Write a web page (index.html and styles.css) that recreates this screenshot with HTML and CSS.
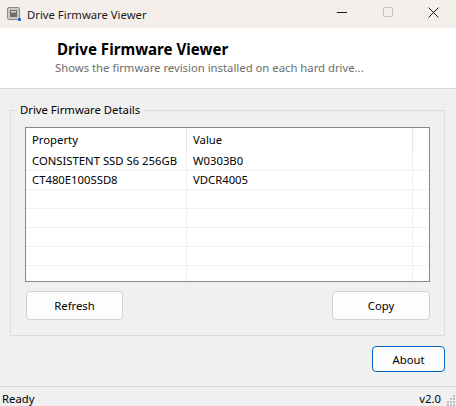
FILE: index.html
```html
<!DOCTYPE html>
<html>
<head>
<meta charset="utf-8">
<link rel="stylesheet" href="styles.css">
</head>
<body>
<div class="window">
  <div class="titlebar">
    <div class="app-title">
      <svg class="app-icon" width="14" height="14" viewBox="0 0 14 14">
        <rect x="0.5" y="0.5" width="12" height="12" rx="1.5" fill="#c9c9c9" stroke="#8a8a8a"/>
        <rect x="3" y="3" width="7" height="7" fill="#6e6e6e"/>
        <rect x="4" y="4" width="5" height="1.5" fill="#d8d8d8"/>
        <rect x="11" y="11" width="3" height="3" fill="#2a6fd6"/>
      </svg>
      <span>Drive Firmware Viewer</span>
    </div>
    <div class="controls">
      <svg class="ctl" width="46" height="28" viewBox="0 0 46 28"><line x1="18" y1="12.5" x2="28" y2="12.5" stroke="#1a1a1a" stroke-width="1"/></svg>
      <svg class="ctl" width="46" height="28" viewBox="0 0 46 28"><rect x="18.5" y="7.5" width="9" height="9" rx="1" fill="none" stroke="#c3c3c3"/></svg>
      <svg class="ctl" width="46" height="28" viewBox="0 0 46 28"><path d="M17.5 7.5 L27.5 17.5 M27.5 7.5 L17.5 17.5" stroke="#1a1a1a" stroke-width="1"/></svg>
    </div>
  </div>
  <div class="header">
    <div class="h-title">Drive Firmware Viewer</div>
    <div class="h-sub">Shows the firmware revision installed on each hard drive...</div>
  </div>
  <div class="body">
    <div class="group">
      <span class="legend">Drive Firmware Details</span>
      <div class="list">
        <div class="lrow lhead">
          <div class="cell c1">Property</div>
          <div class="cell c2">Value</div>
          <div class="cell c3"></div>
        </div>
        <div class="lrow">
          <div class="cell c1">CONSISTENT SSD S6 256GB</div>
          <div class="cell c2">W0303B0</div>
          <div class="cell c3"></div>
        </div>
        <div class="lrow">
          <div class="cell c1">CT480E100SSD8</div>
          <div class="cell c2">VDCR4005</div>
          <div class="cell c3"></div>
        </div>
        <div class="lrow"><div class="cell c1"></div><div class="cell c2"></div><div class="cell c3"></div></div>
        <div class="lrow"><div class="cell c1"></div><div class="cell c2"></div><div class="cell c3"></div></div>
        <div class="lrow"><div class="cell c1"></div><div class="cell c2"></div><div class="cell c3"></div></div>
        <div class="lrow"><div class="cell c1"></div><div class="cell c2"></div><div class="cell c3"></div></div>
        <div class="lrow last"><div class="cell c1"></div><div class="cell c2"></div><div class="cell c3"></div></div>
      </div>
      <div class="btnrow">
        <button class="btn">Refresh</button>
        <button class="btn">Copy</button>
      </div>
    </div>
    <div class="aboutrow">
      <button class="btn about">About</button>
    </div>
  </div>
  <div class="status">
    <span class="st-text">Ready</span>
    <div class="status-right">
      <span class="st-text">v2.0</span>
      <svg class="grip" width="11" height="13" viewBox="0 0 11 13">
        <g fill="#bdbdbd">
          <rect x="8" y="2" width="2" height="2"/>
          <rect x="5" y="5" width="2" height="2"/><rect x="8" y="5" width="2" height="2"/>
          <rect x="2" y="8" width="2" height="2"/><rect x="5" y="8" width="2" height="2"/><rect x="8" y="8" width="2" height="2"/>
          <rect x="2" y="11" width="2" height="2"/><rect x="5" y="11" width="2" height="2"/><rect x="8" y="11" width="2" height="2"/>
        </g>
      </svg>
    </div>
  </div>
</div>
</body>
</html>
```

FILE: styles.css
```css
* { box-sizing: border-box; }
html, body { margin: 0; padding: 0; }
body {
  width: 456px;
  height: 406px;
  overflow: hidden;
  background: #f0f0f0;
  font-family: "Noto Sans", "Open Sans", sans-serif;
  font-size: 11.3px;
  color: #000;
}
.window { display: flex; flex-direction: column; height: 406px; }
.titlebar {
  height: 28px;
  background: #f5efeb;
  display: flex;
  justify-content: space-between;
  align-items: center;
}
.app-title { display: flex; align-items: center; padding-left: 7px; gap: 6px; font-size: 11.3px; color: #1a1a1a; }
.app-icon { display: block; }
.controls { display: flex; align-items: flex-start; height: 28px; margin-right: -1px; }
.ctl { display: block; }
.header {
  height: 61px;
  background: #fff;
  border-bottom: 1px solid #dadada;
  padding: 10px 0 0 55px;
}
.h-title { font-weight: bold; font-size: 15.1px; line-height: 22px; padding-left: 2px; color: #000; }
.h-sub { color: #6d6d6d; font-size: 11.3px; line-height: 16px; }
.body { flex: 1; padding: 21px 11px 0 10px; }
.group {
  position: relative;
  border: 1px solid #dcdcdc;
  padding: 16px 14px 14px 14px;
  height: 226px;
}
.legend {
  position: absolute;
  top: -9px;
  left: 6px;
  padding: 0 3px;
  background: #f0f0f0;
  line-height: 16px;
  color: #000;
}
.list {
  background: #fff;
  border: 1px solid #828790;
  height: 155px;
  overflow: hidden;
}
.lrow { display: flex; height: 19px; border-bottom: 1px solid #f0f0f0; }
.lrow .cell { height: 100%; line-height: 18px; padding-left: 6px; white-space: nowrap; }
.c1 { width: 161px; border-right: 1px solid #f0f0f0; }
.c2 { width: 226px; border-right: 1px solid #f0f0f0; }
.c3 { flex: 1; }
.lhead { height: 24px; border-bottom: none; }
.lhead .cell { line-height: 24px; border-right: 1px solid #e5e5e5; height: 24px; }
.lhead .c3 { border-right: none; }
.btnrow { display: flex; justify-content: space-between; margin-top: 9px; }
.btn {
  font-family: inherit;
  font-size: 11.3px;
  color: #000;
  background: #fdfdfd;
  border: 1px solid #d0d0d0;
  border-radius: 4px;
  height: 29px;
  padding: 0;
  width: 98px;
}
.btnrow .btn:first-child { width: 97px; margin-left: 1px; }
.aboutrow { display: flex; justify-content: flex-end; margin-top: 10px; }
.about { width: 73px; height: 26px; border: 1px solid #0067c0; background: #fdfdfd; }
.status {
  height: 20px;
  border-top: 1px solid #d9d9d9;
  display: flex;
  justify-content: space-between;
  align-items: center;
  padding-left: 2px;
  font-size: 11.3px;
}
.st-text { padding-top: 3px; }
.status-right { display: flex; align-items: flex-end; height: 100%; gap: 4px; }
.status-right .st-text { align-self: center; }
.grip { display: block; }
```
